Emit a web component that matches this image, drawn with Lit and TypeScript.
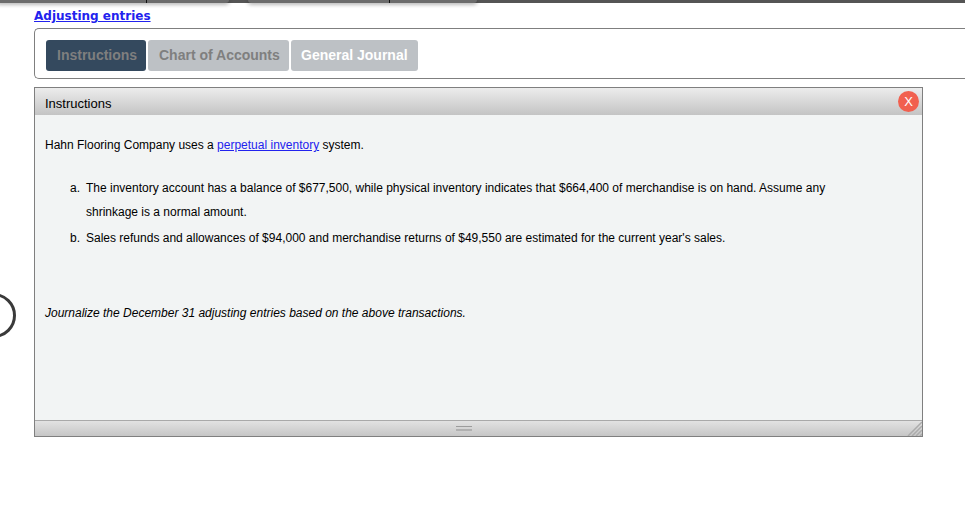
import { LitElement, html, css } from "lit";
import { customElement } from "lit/decorators.js";

@customElement("app-root")
export class AppRoot extends LitElement {
  static styles = css`
    :host { display: block; width: 965px; height: 510px; overflow: hidden; position: relative; background: #fff; font-family: "Liberation Sans", Arial, sans-serif; color: #000; }
    .top { height: 3px; display: flex; background: #555; }
    .seg { height: 3px; background: #6c6c6c; box-shadow: 0 1px 4px rgba(0,0,0,.45); border-radius: 0 0 5px 5px; display: flex; justify-content: flex-start; }
    .seg.one { width: 233px; margin-left: -4px; }
    .seg.two { width: 229px; margin-left: 19px; }
    .sep { width: 1px; height: 3px; background: #111; }
    .seg.one .sep { margin-left: 150px; }
    .seg.two .sep { margin-left: 141px; }
    .page { padding: 5px 42px 0 34px; }
    .title { display: block; font-family: "DejaVu Sans", Verdana, sans-serif; font-weight: 700; font-size: 12px; line-height: 16px; color: #2222ee; text-decoration: underline; }
    .tabs { margin-top: 4px; height: 51px; width: 931px; box-sizing: border-box; border: 1px solid #7f7f7f; border-right: none; border-radius: 5px 0 0 5px; padding: 11px; display: flex; gap: 2px; }
    .tab { height: 31px; box-sizing: border-box; border-radius: 3px; background: #bdc1c5; font-size: 14px; font-weight: 700; line-height: 30px; padding: 0 10px; color: #7f7f7f; white-space: nowrap; }
    .tab.active { background: #34495e; width: 100px; padding-left: 11px; }
    .tab.chart { width: 141px; padding-left: 11px; }
    .tab.white { color: #fff; width: 127px; }
    .panel { margin-top: 8px; width: 889px; height: 350px; box-sizing: border-box; border: 1px solid #7f7f7f; background: #f2f4f4; display: flex; flex-direction: column; }
    .head { height: 27px; flex: none; background: linear-gradient(#ececec, #c4c4c4); display: flex; align-items: center; justify-content: space-between; padding: 0 3px 0 10px; font-size: 13px; box-sizing: border-box; }
    .head-label { padding-top: 3px; }
    .close { width: 21px; height: 21px; border-radius: 50%; background: #f1604f; color: #fff; font-size: 13px; display: flex; align-items: center; justify-content: center; }
    .body { flex: 1; padding: 0 10px; font-size: 12px; line-height: 24px; }
    .intro { margin-top: 18px; }
    .intro a { color: #2222ee; text-decoration: underline; }
    .list { margin-top: 19px; padding-left: 41px; }
    .item { display: grid; grid-template-columns: auto 1fr; }
    .item.b { margin-top: 2px; }
    .marker { position: absolute; margin-left: -16px; }
    .line { width: 760px; }
    .italic { margin-top: 51px; font-style: italic; }
    .foot { height: 16px; flex: none; box-sizing: border-box; border-top: 1px solid #a9a9a9; background: linear-gradient(#e2e2e2, #c6c6c6); display: flex; align-items: center; justify-content: center; position: relative; }
    .grip { width: 16px; height: 5px; margin-right: 29px; box-sizing: border-box; border-top: 1px solid #9c9c9c; border-bottom: 2px solid #b0b0b0; }
    .corner { position: absolute; right: 0; bottom: 0; }
    .ring { position: absolute; left: -29px; top: 293px; width: 45px; height: 45px; box-sizing: border-box; border: 3px solid #3a3a3a; border-radius: 50%; }
  `;

  render() {
    return html`
      <div class="top">
        <div class="seg one"><span class="sep"></span></div>
        <div class="seg two"><span class="sep"></span></div>
      </div>
      <div class="page">
        <a class="title">Adjusting entries</a>
        <div class="tabs">
          <div class="tab active">Instructions</div>
          <div class="tab chart">Chart of Accounts</div>
          <div class="tab white">General Journal</div>
        </div>
        <div class="panel">
          <div class="head"><span class="head-label">Instructions</span><span class="close">X</span></div>
          <div class="body">
            <div class="intro">Hahn Flooring Company uses a <a>perpetual inventory</a> system.</div>
            <div class="list">
              <div class="item"><span class="marker">a.</span><div class="line">The inventory account has a balance of $677,500, while physical inventory indicates that $664,400 of merchandise is on hand. Assume any shrinkage is a normal amount.</div></div>
              <div class="item b"><span class="marker">b.</span><div class="line">Sales refunds and allowances of $94,000 and merchandise returns of $49,550 are estimated for the current year's sales.</div></div>
            </div>
            <div class="italic">Journalize the December 31 adjusting entries based on the above transactions.</div>
          </div>
          <div class="foot">
            <div class="grip"></div>
            <svg class="corner" width="15" height="15" viewBox="0 0 15 15"><path d="M15 1 1 15M15 5 5 15M15 9 9 15M15 13 13 15" stroke="#ababab" stroke-width="1.5" fill="none"/></svg>
          </div>
        </div>
      </div>
      <div class="ring"></div>
    `;
  }
}
